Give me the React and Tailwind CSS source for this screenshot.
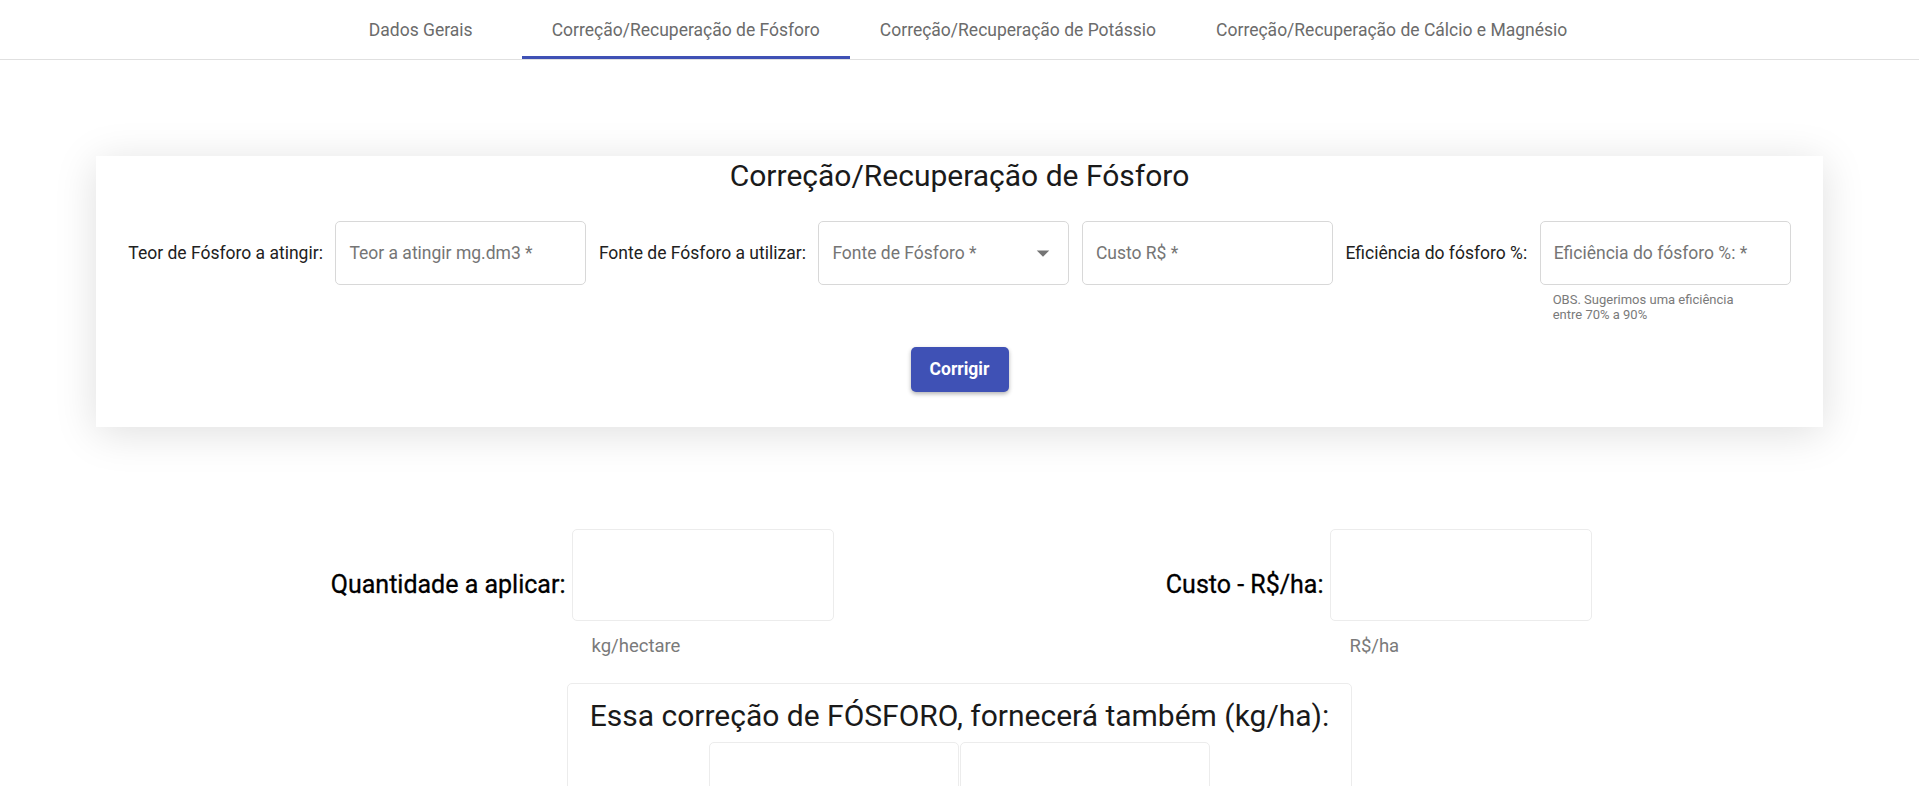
import React from 'react';

const tabs = [
  { label: 'Dados Gerais', fixed: true },
  { label: 'Correção/Recuperação de Fósforo', active: true },
  { label: 'Correção/Recuperação de Potássio' },
  { label: 'Correção/Recuperação de Cálcio e Magnésio' },
];

const Field = ({ placeholder, select = false }) => (
  <div className="flex h-[64px] w-[251px] items-center rounded-[5px] border border-[#d8d8d8] bg-white pl-[13px] pr-[10px]">
    <span className="flex-1 text-[17.5px] text-[#757575]">{placeholder}</span>
    {select && (
      <svg viewBox="0 0 24 24" className="h-[30px] w-[30px] fill-[#757575]">
        <path d="M7 10l5 5 5-5z" />
      </svg>
    )}
  </div>
);

const Label = ({ children }) => (
  <div className="flex h-[64px] items-center whitespace-nowrap text-[17.5px] text-[#212121]">
    {children}
  </div>
);

const Result = ({ label, unit }) => (
  <div className="flex items-start">
    <div className="flex h-[92px] w-[370px] items-center justify-end pr-[6px] pt-[20px]">
      <span className="text-[25px] font-normal text-black [-webkit-text-stroke:0.3px_black]">{label}</span>
    </div>
    <div>
      <div className="h-[92px] w-[262px] rounded-[5px] border border-[#ececec] bg-white" />
      <div className="ml-[20px] mt-[14px] text-[18.5px] leading-[22px] text-[#7a7a7a]">{unit}</div>
    </div>
  </div>
);

export default function App() {
  return (
    <div className="min-h-screen bg-white font-['Roboto',sans-serif]">
      <div className="flex h-[60px] justify-center border-b border-[#e0e0e0] pr-[2px]">
        {tabs.map((t) => (
          <div
            key={t.label}
            className={`relative flex h-full items-center justify-center pt-[2px] text-[17.5px] text-[#6b6b6b] ${
              t.fixed ? 'w-[202px]' : 'px-[30px]'
            }`}
          >
            {t.label}
            {t.active && <div className="absolute bottom-0 left-0 right-0 h-[3px] bg-[#3f51b5]" />}
          </div>
        ))}
      </div>

      <div className="mx-auto mt-[96px] w-[90%] bg-white pb-[35px] shadow-[0_6px_40px_rgba(0,0,0,0.13)]">
        <h2 className="text-center text-[30px] leading-[40px] text-[#1a1a1a]">
          Correção/Recuperação de Fósforo
        </h2>

        <div className="mt-[25px] flex items-start justify-center gap-[12.5px]">
          <Label>Teor de Fósforo a atingir:</Label>
          <Field placeholder="Teor a atingir mg.dm3 *" />
          <Label>Fonte de Fósforo a utilizar:</Label>
          <Field placeholder="Fonte de Fósforo *" select />
          <Field placeholder="Custo R$ *" />
          <Label>Eficiência do fósforo %:</Label>
          <div>
            <Field placeholder="Eficiência do fósforo %: *" />
            <p className="ml-[13px] mt-[7px] text-[13px] leading-[15px] text-[#7a7a7a]">
              OBS. Sugerimos uma eficiência
              <br />
              entre 70% a 90%
            </p>
          </div>
        </div>

        <div className="mt-[25px] flex justify-center">
          <button className="h-[45px] w-[98px] rounded-[5px] bg-[#3f51b5] text-[17.5px] font-bold text-white shadow-[0_2px_4px_rgba(0,0,0,0.3)]">
            Corrigir
          </button>
        </div>
      </div>

      <div className="mx-auto mt-[102px] grid w-[1516px] grid-cols-2">
        <Result label="Quantidade a aplicar:" unit="kg/hectare" />
        <Result label="Custo - R$/ha:" unit="R$/ha" />
      </div>

      <div className="mx-auto mt-[26px] w-fit rounded-[5px] border border-[#ececec] px-[22px] pt-[12px] pb-[20px]">
        <h3 className="text-center text-[30px] leading-[40px] text-[#1a1a1a]">
          Essa correção de FÓSFORO, fornecerá também (kg/ha):
        </h3>
        <div className="mt-[6px] flex justify-center gap-[1px]">
          <div className="h-[92px] w-[250px] rounded-[5px] border border-[#ececec]" />
          <div className="h-[92px] w-[250px] rounded-[5px] border border-[#ececec]" />
        </div>
      </div>
    </div>
  );
}
